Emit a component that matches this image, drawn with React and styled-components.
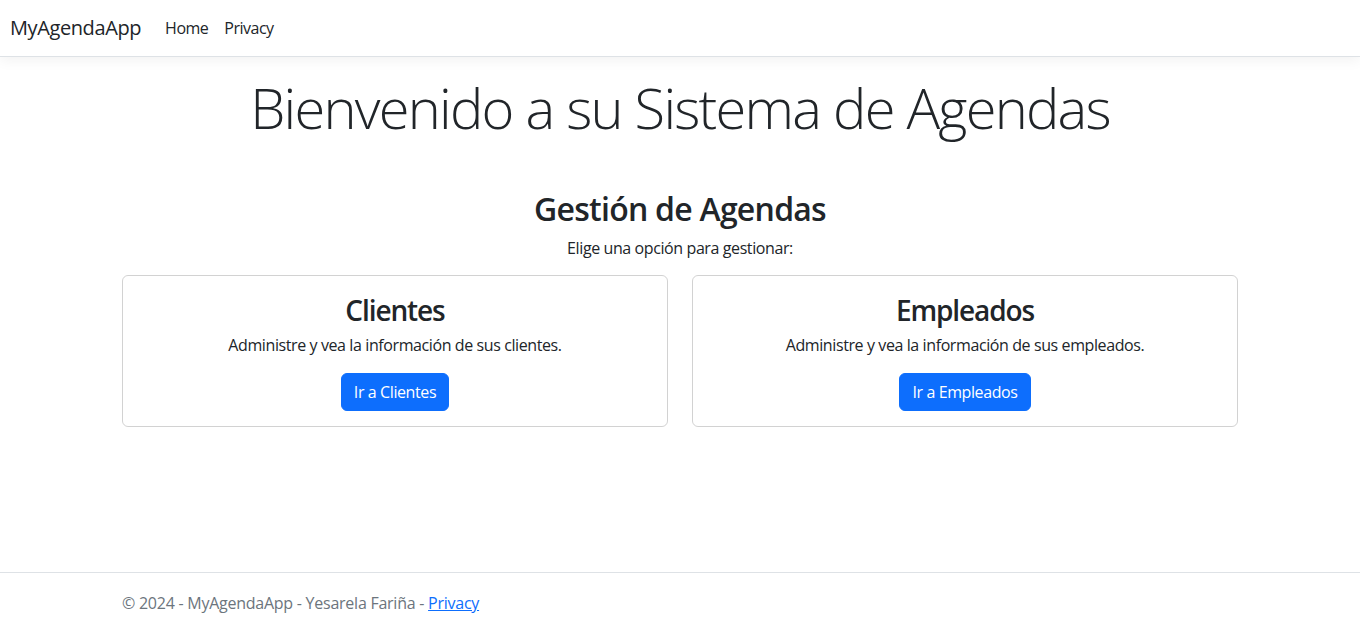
import styled, { createGlobalStyle } from 'styled-components';

const GlobalStyle = createGlobalStyle`
  html, body {
    margin: 0;
    padding: 0;
  }
  body {
    font-family: "Open Sans", "Noto Sans", "Liberation Sans", sans-serif;
    font-size: 16px;
    line-height: 1.5;
    color: #212529;
    background: #fff;
  }
  * { box-sizing: border-box; }
`;

const Page = styled.div`
  min-height: 632px;
  display: flex;
  flex-direction: column;
`;

const NavBar = styled.header`
  display: flex;
  align-items: center;
  padding: 8px 10px;
  border-bottom: 1px solid #dee2e6;
  box-shadow: 0 0.25rem 0.75rem rgba(0, 0, 0, 0.05);
  margin-bottom: 16px;
`;

const Brand = styled.a`
  font-size: 20px;
  line-height: 30px;
  padding: 5px 0;
  margin-right: 16px;
  color: #212529;
  text-decoration: none;
  letter-spacing: -0.4px;
`;

const NavLink = styled.a`
  padding: 8px 8px;
  font-size: 16px;
  color: #212529;
  text-decoration: none;
  letter-spacing: -0.5px;
`;

const Container = styled.main`
  width: 1140px;
  margin: 0 auto;
  padding: 0 12px 16px;
  flex: 1;
`;

const Center = styled.div`
  text-align: center;
`;

const Display = styled.h1`
  font-size: 56px;
  font-weight: 300;
  line-height: 1.2;
  margin: 1px 0 8px;
  letter-spacing: -1.75px;
`;

const Section = styled.section`
  margin-top: 49px;
  text-align: center;
`;

const SectionTitle = styled.h2`
  font-size: 32px;
  font-weight: 600;
  line-height: 1.2;
  margin: 0 0 7px;
  letter-spacing: -0.75px;
`;

const Lead = styled.p`
  margin: 0 0 15px;
  font-size: 16px;
  letter-spacing: -0.4px;
`;

const Row = styled.div`
  display: grid;
  grid-template-columns: 1fr 1fr;
  gap: 24px;
`;

const Card = styled.div`
  border: 1px solid rgba(0, 0, 0, 0.175);
  border-radius: 6px;
  padding: 18px 16px 16px;
  height: 152px;
  text-align: center;
`;

const CardTitle = styled.h3`
  font-size: 28px;
  font-weight: 600;
  line-height: 1.2;
  margin: 0 0 6px;
  letter-spacing: -1.1px;
`;

const CardText = styled.p`
  margin: 0 0 16px;
  font-size: 16px;
  letter-spacing: -0.4px;
`;

const Button = styled.a`
  display: inline-block;
  padding: 6px 12px;
  font-size: 16px;
  line-height: 24px;
  color: #fff;
  background: #0d6efd;
  border: 1px solid #0d6efd;
  border-radius: 6px;
  text-decoration: none;
  letter-spacing: -0.4px;
`;

const Footer = styled.footer`
  border-top: 1px solid #dee2e6;
  line-height: 60px;
  height: 60px;
  color: #6c757d;
  white-space: nowrap;
`;

const FooterInner = styled.div`
  width: 1140px;
  margin: 0 auto;
  padding: 0 12px;
  font-size: 16px;
  letter-spacing: -0.25px;
`;

const FooterLink = styled.a`
  color: #0d6efd;
  text-decoration: underline;
`;

const sections = [
  { title: 'Clientes', text: 'Administre y vea la información de sus clientes.', btn: 'Ir a Clientes' },
  { title: 'Empleados', text: 'Administre y vea la información de sus empleados.', btn: 'Ir a Empleados' },
];

export default function App() {
  return (
    <>
      <GlobalStyle />
      <Page>
        <NavBar>
          <Brand href="#">MyAgendaApp</Brand>
          <NavLink href="#">Home</NavLink>
          <NavLink href="#">Privacy</NavLink>
        </NavBar>
        <Container>
          <Center>
            <Display>Bienvenido a su Sistema de Agendas</Display>
          </Center>
          <Section>
            <SectionTitle>Gestión de Agendas</SectionTitle>
            <Lead>Elige una opción para gestionar:</Lead>
            <Row>
              {sections.map((s) => (
                <Card key={s.title}>
                  <CardTitle>{s.title}</CardTitle>
                  <CardText>{s.text}</CardText>
                  <Button href="#">{s.btn}</Button>
                </Card>
              ))}
            </Row>
          </Section>
        </Container>
        <Footer>
          <FooterInner>
            © 2024 - MyAgendaApp - Yesarela Fariña - <FooterLink href="#">Privacy</FooterLink>
          </FooterInner>
        </Footer>
      </Page>
    </>
  );
}
